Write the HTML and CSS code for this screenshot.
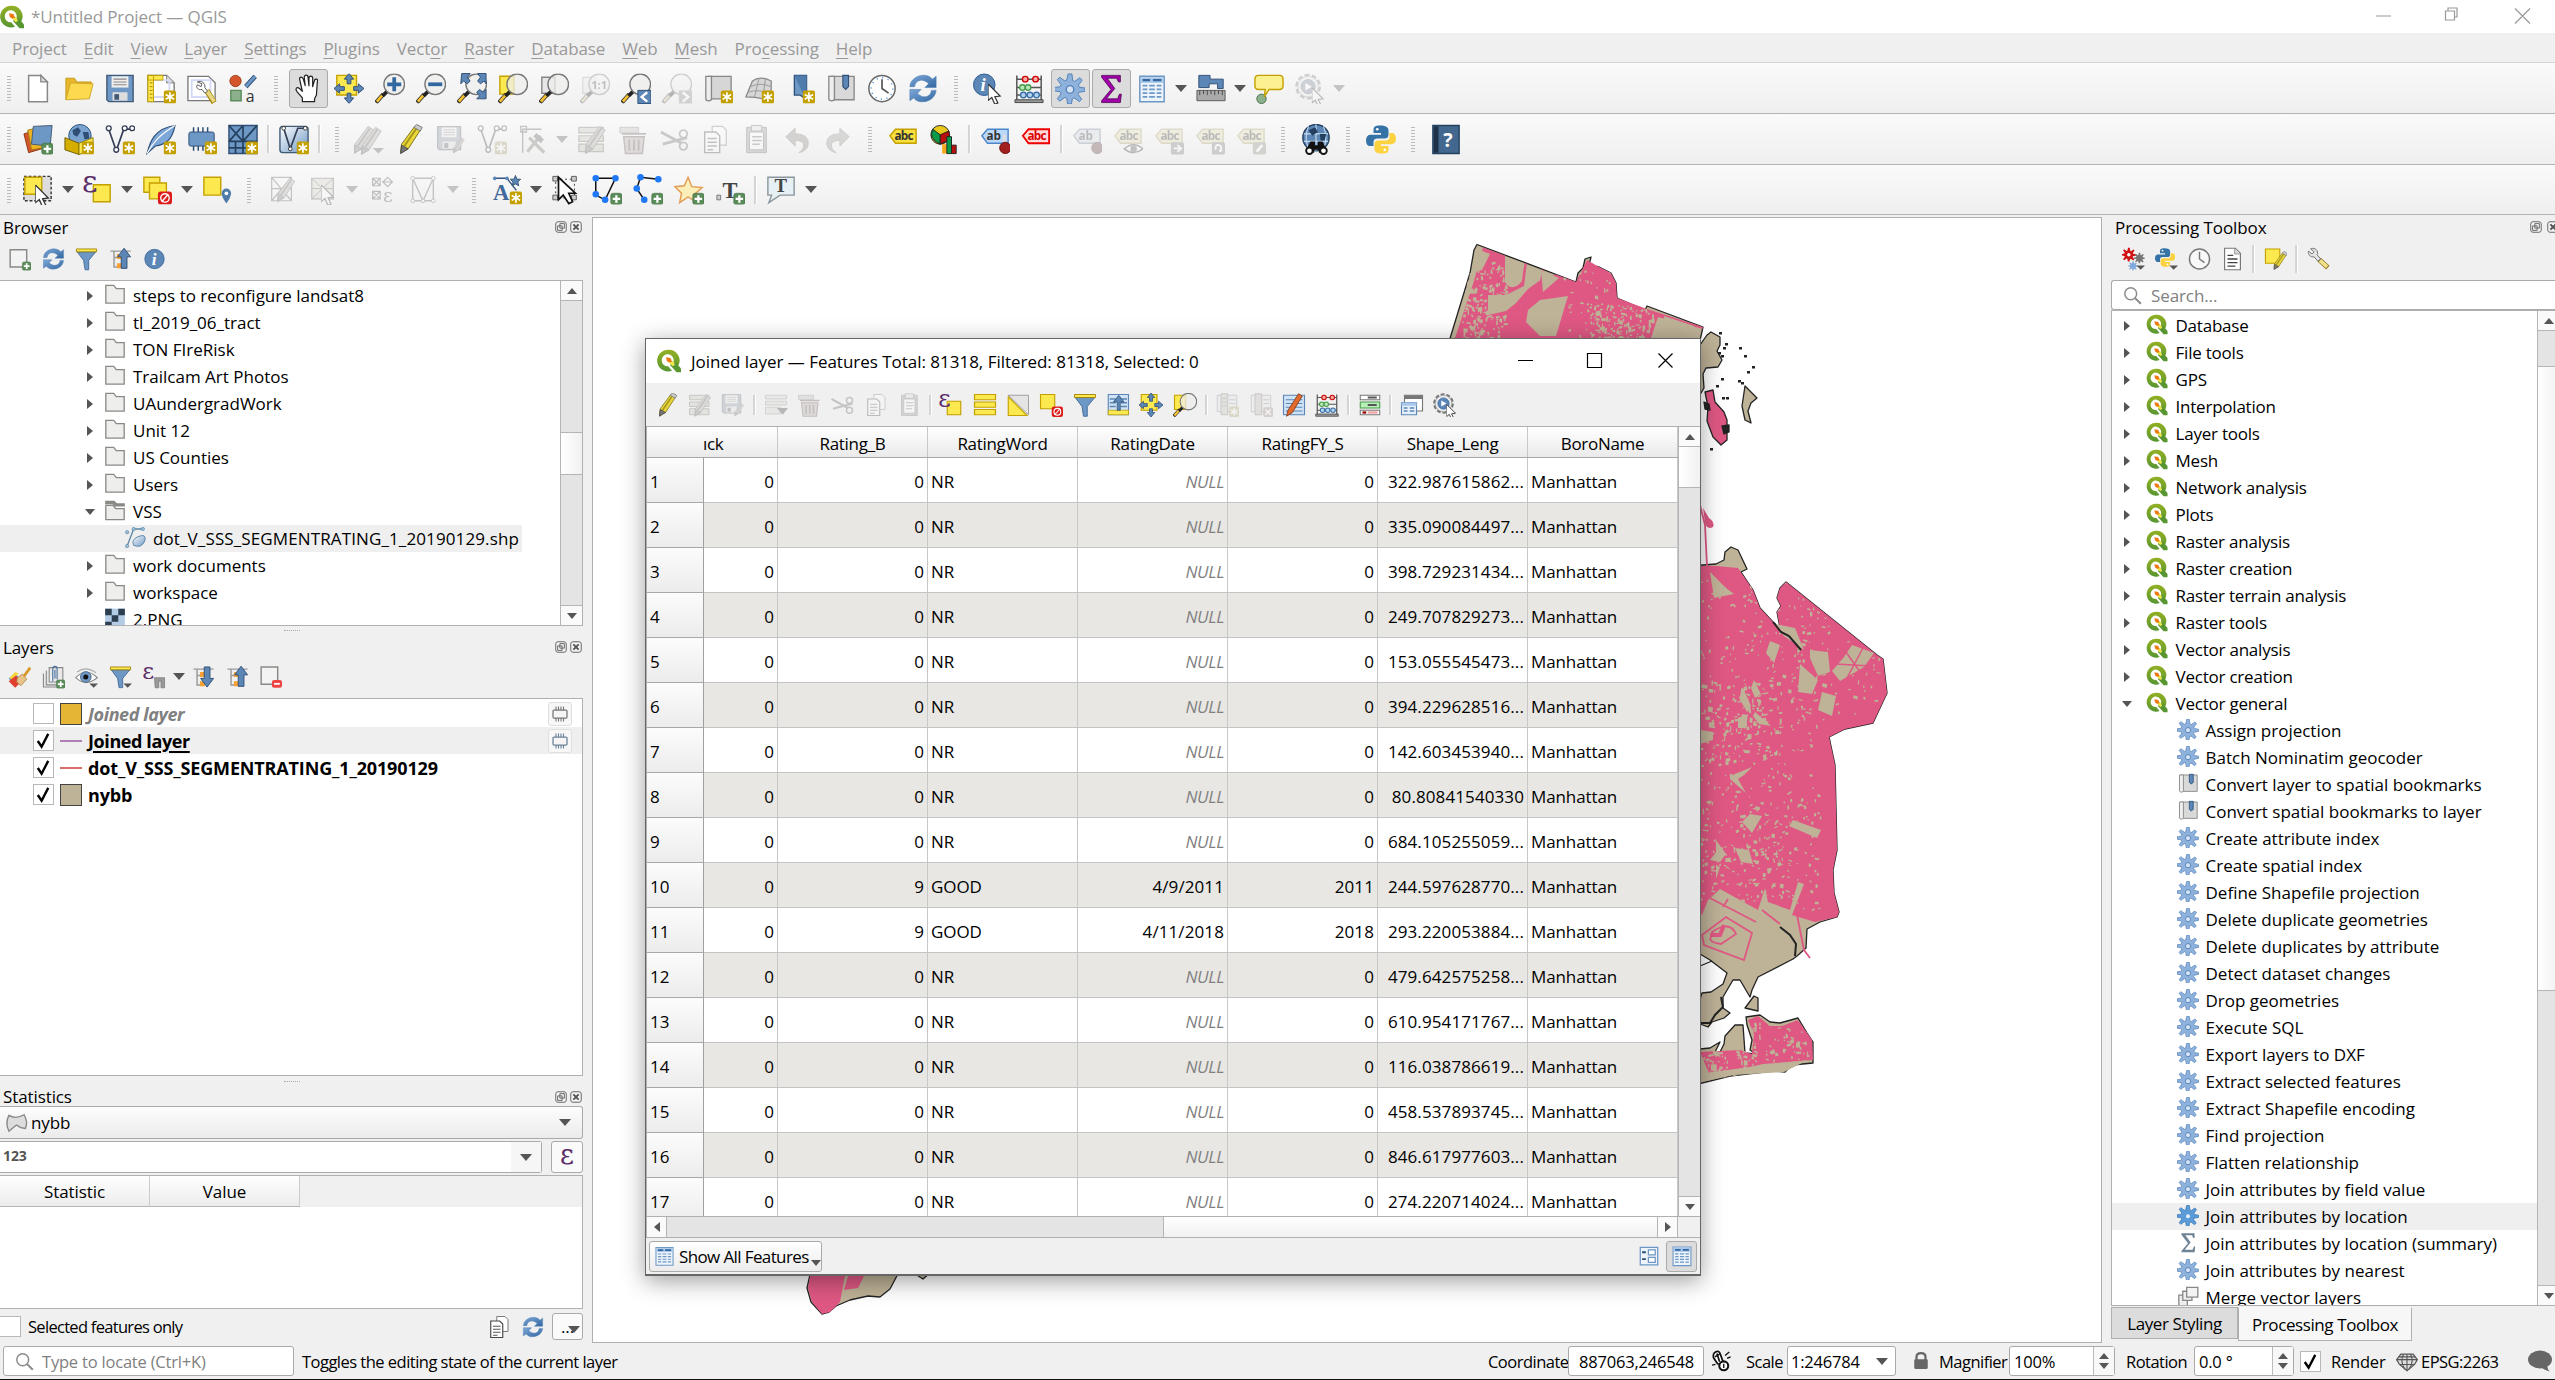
FILE: index.html
```html
<!DOCTYPE html>
<html lang="en">
<head>
<meta charset="utf-8">
<title>*Untitled Project — QGIS</title>
<link rel="stylesheet" href="styles.css">
</head>
<body>
<svg class="defs" width="0" height="0" aria-hidden="true">
<defs>
<linearGradient id="gq" x1="0" y1="0" x2="0" y2="1"><stop offset="0" stop-color="#93b023"/><stop offset="1" stop-color="#589632"/></linearGradient>
<linearGradient id="gb" x1="0" y1="0" x2="1" y2="1"><stop offset="0" stop-color="#7da7d9"/><stop offset="1" stop-color="#33679f"/></linearGradient>
<linearGradient id="gl" x1="0" y1="0" x2="1" y2="1"><stop offset="0" stop-color="#fff"/><stop offset="1" stop-color="#6d97c4"/></linearGradient>
<symbol id="b-star" viewBox="0 0 32 32"><rect x="19" y="18" width="13" height="14" rx="2" fill="#c4a000"/><path d="M25.5 20v10M21 22.5l9 5M30 22.5l-9 5" stroke="#fff" stroke-width="1.8"/></symbol>
<symbol id="b-plus" viewBox="0 0 32 32"><rect x="20" y="20" width="12" height="12" rx="2.5" fill="#5a8c5a" stroke="#3f6b3f" stroke-width=".6"/><path d="M26 22v8M22 26h8" stroke="#fff" stroke-width="2.4"/></symbol>
<symbol id="b-arrow" viewBox="0 0 32 32"><path d="M20 25h12l-6 6z" fill="#555"/></symbol>
<symbol id="qgis" viewBox="0 0 32 32"><path d="M15 1a14.500 14.500 0 1 0 5 28l-5-6a8 8 0 1 1 7-6l6 6A14.500 14.500 0 0 0 15 1z" fill="url(#gq)"/><path d="M18 18l7 0 7 8v5h-6l-8-9z" fill="#589632"/><path d="M15 15l6 1 3 5-3 2-5-5z" fill="#f0e64a"/><path d="M12 11l6 1 2 5-4 1-3-2z" fill="#ee7913"/></symbol>
<symbol id="new" viewBox="0 0 32 32"><path d="M6 2h13l7 7v21H6z" fill="#fff" stroke="#888" stroke-width="1.6"/><path d="M19 2v7h7z" fill="#ddd" stroke="#888" stroke-width="1.4"/></symbol>
<symbol id="open" viewBox="0 0 32 32"><path d="M2 28V5h9l3 4h15v5" fill="#e8b62a" stroke="#c49a1a"/><path d="M2 28l5-18 24 1-4 16z" fill="#fcd94f" stroke="#cfa628"/></symbol>
<symbol id="save" viewBox="0 0 32 32"><path d="M2 2h28v28H4l-2-2z" fill="#6d97c4" stroke="#415a75" stroke-width="1.5"/><path d="M7 3h18v12H7z" fill="#eee"/><path d="M9 6h14M9 9h14M9 12h14" stroke="#888" stroke-width="1.2"/><path d="M8 20h16v9H8z" fill="#ddd"/><path d="M10 22h5v6h-5z" fill="#415a75"/></symbol>
<symbol id="layout" viewBox="0 0 32 32"><path d="M2 2h20l8 8v20H2z" fill="#fff" stroke="#777" stroke-width="1.4"/><path d="M22 2v8h8" fill="#ddd" stroke="#777"/><path d="M7 7h18v18H7z" fill="none" stroke="#d3d9f7" stroke-width="2"/><path d="M2 2h6v28H2zM2 2h16v5H2z" fill="#fce94f" stroke="#c4a000"/><path d="M4 10h3M4 14h3M4 18h3M4 22h3M4 26h3" stroke="#a08000"/><use href="#b-star"/></symbol>
<symbol id="layman" viewBox="0 0 32 32"><path d="M1 3h22l7 7v19H1z" fill="#fff" stroke="#777" stroke-width="1.4"/><path d="M5 7h20v18H5z" fill="#fff" stroke="#d3d9f7" stroke-width="2"/><path d="M21 18l8 13" stroke="#a08000" stroke-width="6"/><path d="M21 18l8 12" stroke="#e8d680" stroke-width="4"/><path d="M11 9c4-2 9 1 8 6l3 4-3 2-3-4c-4 1-7-2-5-5l4 2 1-3z" fill="#fff" stroke="#555"/></symbol>
<symbol id="style" viewBox="0 0 32 32"><circle cx="8" cy="8" r="6" fill="#d4562a" stroke="#9a3b18"/><path d="M19 14L29 3" stroke="#2e5077" stroke-width="5"/><path d="M19 14L29 3" stroke="#6d97c4" stroke-width="3"/><path d="M3 18h11v11H3z" fill="#8bb08b" stroke="#5a8c5a" stroke-width="1.5"/><text x="19" y="30" font-family="Open Sans" font-size="17" fill="#333">a</text></symbol>
<symbol id="hand" viewBox="0 0 32 32"><path d="M10 30V26L4 19c-2-3 0-5 3-3l3 3L7 6c0-3 3-3 4 0l2 7-1-9c0-3 4-3 4 0l1 9V5c0-3 4-3 4 0l0 9 2-7c1-2 4-1 3 1l-1 15-2 4v3z" fill="#fff" stroke="#222" stroke-width="1.3" stroke-linejoin="round"/></symbol>
<symbol id="arrows4" viewBox="0 0 32 32"><path d="M16 0l5 6h-3v5h-4V6h-3zM16 32l5-6h-3v-5h-4v5h-3zM0 16l6-5v3h5v4H6v3zM32 16l-6-5v3h-5v4h5v3z" fill="#5b86b5" stroke="#2e4e75" stroke-width="1"/></symbol>
<symbol id="pansel" viewBox="0 0 32 32"><path d="M3 2h21v21H3z" fill="#fce94f" stroke="#c4a000" stroke-width="1.5"/><use href="#arrows4"/></symbol>
<symbol id="mag" viewBox="0 0 32 32"><path d="M1 31L9 22" stroke="#333" stroke-width="4.500"/><path d="M2 30L8 23" stroke="#f5c12e" stroke-width="2.800"/><path d="M8 24l5-5" stroke="#222" stroke-width="4"/><circle cx="20.500" cy="11.500" r="11" fill="#eeeeec" fill-opacity=".75" stroke="#777" stroke-width="1.500"/></symbol>
<symbol id="zin" viewBox="0 0 32 32"><use href="#mag"/><path d="M20.500 4v15M13 11.500h15" stroke="#33679f" stroke-width="4"/></symbol>
<symbol id="zout" viewBox="0 0 32 32"><use href="#mag"/><path d="M13 11.500h15" stroke="#33679f" stroke-width="4"/></symbol>
<symbol id="zfull" viewBox="0 0 32 32"><use href="#mag"/><path d="M5 0h9l-3 4 3 4-3 3-4-3-3 3zM31 0h-9l3 4-3 4 3 3 4-3 2 3zM31 27h-10l3-3-3-4 3-3 4 3 3-3z" fill="#5b86b5" stroke="#2e4e75"/></symbol>
<symbol id="zsel" viewBox="0 0 32 32"><path d="M2 3h15v19H2z" fill="#fce94f" stroke="#c4a000" stroke-width="1.5"/><use href="#mag"/></symbol>
<symbol id="zlay" viewBox="0 0 32 32"><path d="M3 4h14v17H3z" fill="#e6e6e6" stroke="#888" stroke-width="1.5"/><use href="#mag"/></symbol>
<symbol id="znat" viewBox="0 0 32 32"><path d="M3 4h14v17H3z" fill="#e6e6e6" stroke="#888"/><use href="#mag"/><text x="12" y="17" font-family="Open Sans" font-weight="bold" font-size="12" fill="#444">1:1</text></symbol>
<symbol id="zlast" viewBox="0 0 32 32"><use href="#mag"/><path d="M18 18h14v14H18z" fill="#5b86b5" stroke="#2e4e75"/><path d="M28 20l-6 5 6 5" fill="none" stroke="#fff" stroke-width="2.500"/></symbol>
<symbol id="znext" viewBox="0 0 32 32"><use href="#mag"/><path d="M18 18h14v14H18z" fill="#888"/><path d="M22 20l6 5-6 5" fill="none" stroke="#fff" stroke-width="2.500"/></symbol>
<symbol id="newmap" viewBox="0 0 32 32"><path d="M6 3h24v24H6z" fill="#d6d6d6" stroke="#888" stroke-width="1.4"/><path d="M3 3h6v24c0 3-6 3-6 0z" fill="#eee" stroke="#888" stroke-width="1.400"/><use href="#b-star"/></symbol>
<symbol id="map3d" viewBox="0 0 32 32"><path d="M9 8q8-6 20 0v21q-14-4-27-4z" fill="#d6d6d6" stroke="#888" stroke-width="1.3"/><path d="M7 14q10-5 22 0M4 20q12-4 25 2M16 5l-5 21M23 5l-3 22" fill="none" stroke="#999"/><use href="#b-star"/></symbol>
<symbol id="bookm" viewBox="0 0 32 32"><path d="M10 2h13v26l-7-5-6 0z" fill="#6d97c4" stroke="#2e4e75" stroke-width="1.4"/><path d="M10 2h13v27z" fill="#4f7cad"/><use href="#b-star"/></symbol>
<symbol id="bmap" viewBox="0 0 32 32"><path d="M5 3h25v25H5z" fill="#d9d9d9" stroke="#888" stroke-width="1.400"/><path d="M3 3h6v24c0 3-6 3-6 0z" fill="#eee" stroke="#888" stroke-width="1.4"/><path d="M18 2h6v12l-3 3-3-3z" fill="#5b86b5" stroke="#2e4e75" stroke-width="1.2"/></symbol>
<symbol id="clock" viewBox="0 0 32 32"><circle cx="16" cy="16" r="14" fill="#fff" stroke="#666" stroke-width="1.6"/><circle cx="16" cy="16" r="11.500" fill="none" stroke="#4a90d9" stroke-width="1.500" stroke-dasharray="1.2 4.800"/><path d="M16 6v10l7 5" fill="none" stroke="#555" stroke-width="1.8"/></symbol>
<symbol id="history" viewBox="0 0 32 32"><circle cx="16" cy="16" r="14" fill="#f8f8f8" stroke="#777" stroke-width="2"/><path d="M16 6v10l7 5" fill="none" stroke="#777" stroke-width="2"/></symbol>
<symbol id="refresh" viewBox="0 0 32 32"><path d="M2 14C3 2 20-2 26 6l4-3v12H18l4-4C17 5 8 6 7 14z" fill="url(#gb)" stroke="#4d7fb5" stroke-width=".6"/><path d="M30 18C29 30 12 34 6 26l-4 3V17h12l-4 4c5 6 14 5 15-3z" fill="url(#gb)" stroke="#4d7fb5" stroke-width=".6"/></symbol>
<symbol id="cursor" viewBox="0 0 32 32"><path d="M0 0l0 22 5-4 4 9 4-2-4-8 7-1z" fill="#fff" stroke="#333" stroke-width="1.600"/></symbol>
<symbol id="ident" viewBox="0 0 32 32"><circle cx="12" cy="12" r="11.500" fill="#5b86b5" stroke="#2e5c94"/><text x="8" y="19" font-family="Liberation Serif" font-style="italic" font-weight="bold" font-size="20" fill="#fff">i</text><use href="#cursor" x="16" y="11" width="26" height="26"/></symbol>
<symbol id="info" viewBox="0 0 32 32"><circle cx="16" cy="16" r="13.500" fill="#5b86b5" stroke="#2e5c94"/><text x="12" y="24" font-family="Liberation Serif" font-style="italic" font-weight="bold" font-size="24" fill="#fff">i</text></symbol>
<symbol id="abacus" viewBox="0 0 32 32"><path d="M3 2v27M29 2v27M3 6h26M3 15h26M3 23h26" stroke="#555" stroke-width="1.6"/><path d="M1 28h30v3H1z" fill="#999" stroke="#444"/><g stroke-width="1.400"><g fill="#f5a9a9" stroke="#c00"><circle cx="12" cy="6" r="3"/><circle cx="23" cy="6" r="3"/></g><g fill="#b6e8b6" stroke="#4a9a4a"><circle cx="9" cy="15" r="3"/><circle cx="15" cy="15" r="3"/></g><g fill="#b5d4f2" stroke="#3a6ea5"><circle cx="10" cy="23" r="3"/><circle cx="17" cy="23" r="3"/><circle cx="24" cy="23" r="3"/></g></g></symbol>
<symbol id="gear" viewBox="0 0 32 32"><g fill="#8fb2dc" stroke="#4f7fb8" stroke-width="1"><path id="gp" d="M14 .5h4l1 7 2 1 5.500-4 2.500 2.500-4 5.500 1 2 6 1v3.500l-6.500 1-1 2 4 5.500-2.500 2.500-5.500-4-2 1-1 5.500h-4l-1-6-2-1-5.500 4-2.500-2.500 4-5.500-1-2-6.500-1v-3.500l6.500-1 1-2-4-5.500 2.500-2.500 5.500 4 2-1z"/></g><circle cx="16" cy="17" r="4" fill="#d5e3f3" stroke="#4f7fb8" stroke-width="1.400"/></symbol>
<symbol id="gearsel" viewBox="0 0 32 32"><use href="#gp" fill="#5b9bd8" stroke="#2f6fb0"/><circle cx="16" cy="17" r="3" fill="#e8f1fa"/></symbol>
<symbol id="sigma" viewBox="0 0 32 32"><path d="M6 2h20v7h-2l-2-4H12l8 11-9 11h12l2-5h2l-1 9H6v-2l10-12L6 4z" fill="#a000a8" stroke="#4a004e" stroke-width=".8"/></symbol>
<symbol id="sigmas" viewBox="0 0 32 32"><path d="M6 2h20v7h-2l-2-4H12l8 11-9 11h12l2-5h2l-1 9H6v-2l10-12L6 4z" fill="#6f8396"/></symbol>
<symbol id="table" viewBox="0 0 32 32"><path d="M3 3h26v27H3z" fill="#eef4fb" stroke="#6d97c4" stroke-width="1.600"/><path d="M4 4h24v6H4z" fill="#a9c7ea"/><path d="M6 7h8M17 7h9" stroke="#33679f" stroke-width="2.500"/><path d="M6 13h5M13 13h6M21 13h5M6 17h5M13 17h6M21 17h5M6 21h5M13 21h6M21 21h5M6 25h5M13 25h6M21 25h5" stroke="#6d97c4" stroke-width="1.800"/></symbol>
<symbol id="measure" viewBox="0 0 32 32"><path d="M3 2h12v4h14v10h-6v-5H14v4H3z" fill="#5b86b5" stroke="#2e4e75"/><path d="M1 18h30v11H1z" fill="#aaa" stroke="#555"/><path d="M4 18v5M8 18v4M12 18v5M16 18v4M20 18v5M24 18v4M28 18v5" stroke="#444"/></symbol>
<symbol id="tip" viewBox="0 0 32 32"><ellipse cx="8" cy="27" rx="5" ry="5" fill="#8bb08b" stroke="#4c6b4c"/><path d="M5 2h22q4 0 4 4v7q0 4-4 4H16L11 25l1-8H5q-4 0-4-4V6q0-4 4-4z" fill="#fbf191" stroke="#c4a000" stroke-width="1.500"/></symbol>
<symbol id="run" viewBox="0 0 32 32"><circle cx="14" cy="14" r="12" fill="#e8e8e8" stroke="#777" stroke-width="3.500" stroke-dasharray="5 2.500"/><circle cx="14" cy="14" r="11" fill="#eee" stroke="#999"/><circle cx="14" cy="14" r="7.500" fill="#5b86b5" stroke="#33679f"/><path d="M11 10l7 4-7 4z" fill="#fff"/><use href="#cursor" x="18" y="15" width="24" height="24"/></symbol>
<symbol id="layers" viewBox="0 0 32 32"><path d="M1 10l16-5 6 20-17 5z" fill="#d4562a" stroke="#8a3414"/><path d="M5 6l17-4 4 22-17 3z" fill="#f0b323" stroke="#a07c10"/><path d="M11 2l20-1-2 22-20-2z" fill="#6d97c4" stroke="#415a75"/><use href="#b-plus"/></symbol>
<symbol id="globebox" viewBox="0 0 32 32"><circle cx="17" cy="12" r="12" fill="#7aa3d0" stroke="#2e4e75"/><path d="M9 6l6-3 3 4-4 6-4-2zM20 8l6 0 1 7-5 1z" fill="#2e4e75"/><path d="M1 14l15 6v12L1 27z" fill="#d3ad00" stroke="#6b5900"/><path d="M16 20l15-6v13l-15 5z" fill="#fce94f" stroke="#8f7600"/><use href="#b-star"/></symbol>
<symbol id="vee" viewBox="0 0 32 32"><path d="M4 5l8 23L20 5h9" fill="none" stroke="#333e55" stroke-width="1.800"/><g fill="#fff" stroke="#333e55" stroke-width="1.400"><circle cx="4" cy="4" r="2.600"/><circle cx="12" cy="27" r="2.600"/><circle cx="21" cy="4" r="2.600"/><circle cx="29" cy="4" r="2.600"/></g><use href="#b-star"/></symbol>
<symbol id="feather" viewBox="0 0 32 32"><path d="M1 31C4 20 8 4 31 1c-2 10-6 20-21 22z" fill="#7da7d9" stroke="#2e4e75" stroke-width="1.200"/><path d="M1 31C8 18 16 10 31 1" fill="none" stroke="#fff" stroke-width="1.200"/><use href="#b-star"/></symbol>
<symbol id="chip" viewBox="0 0 32 32"><path d="M7 3v25M12 3v25M17 3v25M22 3v25" stroke="#2e4e75" stroke-width="1.600"/><rect x="2" y="8" width="27" height="15" rx="2" fill="#6d97c4" stroke="#2e4e75"/><use href="#b-star"/></symbol>
<symbol id="mesh" viewBox="0 0 32 32"><path d="M1 1h30v30H1z" fill="#6d97c4" stroke="#2e4e75" stroke-width="1.500"/><path d="M1 1l15 17L31 1M1 18h30M16 1v30M1 18L16 1M1 25h30M8 18v13" fill="none" stroke="#24405f" stroke-width="1.800"/><use href="#b-star"/></symbol>
<symbol id="vlayer" viewBox="0 0 32 32"><rect x="1" y="2" width="30" height="28" rx="3" fill="url(#gl)" stroke="#415a75" stroke-width="1.500"/><path d="M5 4l7 22L20 4h8" fill="none" stroke="#333e55" stroke-width="1.800"/><circle cx="5" cy="4" r="2" fill="#fff" stroke="#333"/><circle cx="12" cy="26" r="2" fill="#fff" stroke="#333"/><circle cx="28" cy="4" r="2" fill="#fff" stroke="#333"/><use href="#b-star"/></symbol>
<symbol id="pencil" viewBox="0 0 32 32"><path d="M6 30l1-9L21 2l6 4-13 20z" fill="#e8d63c" stroke="#7a6c10"/><path d="M10 23L23 4" stroke="#a59519" stroke-width="2"/><path d="M6 31l1-9 7 4z" fill="#777" stroke="#444"/><path d="M20 3l3-3 6 3-2 4z" fill="#ccc" stroke="#777"/></symbol>
<symbol id="gpencil" viewBox="0 0 32 32"><path d="M6 30l1-9L21 2l6 4-13 20z" fill="#b9a79a" stroke="#555"/><path d="M10 23L23 4" stroke="#6d5a50" stroke-width="2"/><path d="M6 31l1-9 7 4z" fill="#777" stroke="#444"/></symbol>
<symbol id="pencils" viewBox="0 0 32 32"><use href="#gpencil" x="-6"/><use href="#gpencil" x="2" y="1"/><use href="#b-arrow"/></symbol>
<symbol id="savep" viewBox="0 0 32 32"><use href="#save" width="28" height="29"/><use href="#gpencil" x="15" y="12" width="18" height="20"/></symbol>
<symbol id="tools" viewBox="0 0 32 32"><path d="M5 30V5h20M3 2h6v6H3z" fill="none" stroke="#555" stroke-width="1.500"/><path d="M10 29L24 12M12 14l16 16" stroke="#7c6f50" stroke-width="3.500"/><path d="M18 11l8 7" stroke="#555" stroke-width="5"/></symbol>
<symbol id="tabp" viewBox="0 0 32 32"><path d="M2 3h26v6H2zM2 12h26v6H2zM2 21h26v8H2z" fill="#c9c49a" stroke="#6e6a48" stroke-width="1.300"/><use href="#gpencil" x="3"/></symbol>
<symbol id="trash" viewBox="0 0 32 32"><path d="M2 3h20v6H2z" fill="#c9b8b0" stroke="#777"/><path d="M6 13h22l-2 18H8z" fill="#c9a0a0" stroke="#844" stroke-width="1.500"/><path d="M4 10h26M12 16v12M17 16v12M22 16v12" stroke="#844" stroke-width="2"/></symbol>
<symbol id="cut" viewBox="0 0 32 32"><path d="M2 8l22 12M4 21L30 14" stroke="#666" stroke-width="3"/><circle cx="26" cy="10" r="4" fill="none" stroke="#666" stroke-width="2"/><circle cx="26" cy="23" r="4" fill="none" stroke="#666" stroke-width="2"/></symbol>
<symbol id="copy" viewBox="0 0 32 32"><path d="M13 2h11l4 4v16H13z" fill="#fff" stroke="#777" stroke-width="1.300"/><path d="M5 8h12l4 4v18H5z" fill="#fff" stroke="#444" stroke-width="1.500"/><path d="M8 15h10M8 19h10M8 23h10M8 27h6" stroke="#555" stroke-width="1.500"/></symbol>
<symbol id="paste" viewBox="0 0 32 32"><path d="M6 3h21v27H6z" fill="#999" stroke="#555"/><path d="M9 8h15v19H9z" fill="#fff" stroke="#555"/><path d="M11 1h11v6H11z" fill="#ddd" stroke="#555"/><path d="M12 13h10M12 17h10M12 21h8" stroke="#666" stroke-width="1.500"/></symbol>
<symbol id="undo" viewBox="0 0 32 32"><path d="M4 13L14 4v6c10 0 14 4 14 10s-5 9-10 10c4-3 5-5 5-8s-3-5-9-5v6z" fill="#98826a" stroke="#7c6a55"/></symbol>
<symbol id="redo" viewBox="0 0 32 32"><path d="M28 13L18 4v6C8 10 4 14 4 20s5 9 10 10c-4-3-5-5-5-8s3-5 9-5v6z" fill="#8c9a85" stroke="#6c7a66"/></symbol>
<symbol id="abc" viewBox="0 0 32 32"><path d="M2 12l6-7h22v15H8z" fill="#f7df3d" stroke="#c4a000" stroke-width="1.500"/><text x="7" y="17" font-family="Open Sans" font-weight="bold" font-size="12.500" textLength="20" fill="#333">abc</text></symbol>
<symbol id="abcr" viewBox="0 0 32 32"><path d="M2 12l6-7h22v15H8z" fill="#ffd9d9" stroke="#e00" stroke-width="2"/><text x="7" y="17" font-family="Open Sans" font-weight="bold" font-size="12.500" textLength="20" fill="#d00">abc</text></symbol>
<symbol id="abpin" viewBox="0 0 32 32"><path d="M2 12l6-7h22v15H8z" fill="#bcd9fa" stroke="#4a86c8" stroke-width="1.500"/><text x="7" y="17" font-family="Open Sans" font-weight="bold" font-size="12.500" fill="#333">ab</text><path d="M26 11v12" stroke="#ddd" stroke-width="3"/><circle cx="27" cy="25" r="6" fill="#a32020" stroke="#6b1010"/></symbol>
<symbol id="diagram" viewBox="0 0 32 32"><circle cx="12" cy="11" r="10" fill="#e9c81c" stroke="#222"/><path d="M12 11L4 5q-5 10 8 16z" fill="#0a9b4a" stroke="#222"/><path d="M12 11l9-4q4 10-9 14z" fill="#b80f0f" stroke="#222"/><path d="M14 21h5v10h-5z" fill="#f6a821"/><path d="M19 13h5v18h-5z" fill="#0a9b4a" stroke="#222"/><path d="M24 22h5v9h-5z" fill="#b80f0f" stroke="#222"/></symbol>
<symbol id="abcx" viewBox="0 0 32 32"><use href="#abc"/><rect x="18" y="19" width="14" height="13" rx="2" fill="#777"/><path d="M21 25.500h7M25 22l4 3.500-4 3.500" stroke="#fff" stroke-width="2" fill="none"/></symbol>
<symbol id="abcrot" viewBox="0 0 32 32"><use href="#abc"/><rect x="18" y="19" width="14" height="13" rx="2" fill="#777"/><path d="M22 27q-1-6 4-5 4 2 0 7M26 29l3-2" stroke="#fff" stroke-width="2" fill="none"/></symbol>
<symbol id="abced" viewBox="0 0 32 32"><use href="#abc"/><rect x="18" y="19" width="14" height="13" rx="2" fill="#8a8a60"/><path d="M22 29l6-7" stroke="#fff" stroke-width="3"/></symbol>
<symbol id="abceye" viewBox="0 0 32 32"><use href="#abc"/><path d="M12 26q10-9 20 0-10 8-20 0z" fill="#fff" stroke="#333" stroke-width="1.500"/><circle cx="22" cy="26" r="3.500" fill="#555"/></symbol>
<symbol id="binoc" viewBox="0 0 32 32"><circle cx="16" cy="14" r="14" fill="#5b86b5" stroke="#24405f" stroke-width="1.500"/><path d="M3 10h26M3 18h26M16 0v28M8 2q-5 12 0 24M24 2q5 12 0 24" stroke="#c7dbf0" fill="none" stroke-width="1.200"/><path d="M8 6l7-3 3 5-6 4zM20 10l7 0-2 7-4 0z" fill="#24405f"/><path d="M6 26l4-8h5v4h3v-4h5l4 8v4H19v-3h-5v3H6z" fill="#111"/><circle cx="9" cy="28" r="3.500" fill="#fff" stroke="#111" stroke-width="2"/><circle cx="24" cy="28" r="3.500" fill="#fff" stroke="#111" stroke-width="2"/></symbol>
<symbol id="python" viewBox="0 0 32 32"><path d="M15 1c-6 0-7 2-7 5v3h8v2H5c-3 0-5 2-5 6s2 6 4 6h4v-4c0-3 2-4 4-4h8c2 0 4-1 4-4V6c0-3-3-5-9-5z" fill="#3573a6"/><path d="M17 31c6 0 7-2 7-5v-3h-8v-2h11c3 0 5-2 5-6s-2-6-4-6h-3v4c0 3-2 4-4 4h-8c-2 0-4 1-4 4v5c0 3 3 5 8 5z" fill="#fdd23f"/><circle cx="12" cy="5" r="1.400" fill="#fff"/><circle cx="20" cy="27" r="1.400" fill="#fff"/></symbol>
<symbol id="help" viewBox="0 0 32 32"><path d="M2 1h28v30H2z" fill="#43688f" stroke="#24405f" stroke-width="1.500"/><path d="M3 2h5v28H3z" fill="#1d3147"/><text x="13" y="24" font-family="Open Sans" font-weight="bold" font-size="21" fill="#fff">?</text></symbol>
<symbol id="select" viewBox="0 0 32 32"><path d="M1 2h29v26H1z" fill="#ddd" stroke="#333" stroke-width="1.500" stroke-dasharray="3 2"/><path d="M2 3h18v18H2z" fill="#fce94f" stroke="#c4a000" stroke-width="1.500"/><use href="#cursor" x="13" y="11" width="28" height="28"/></symbol>
<symbol id="eps" viewBox="0 0 32 32"><text x="-1" y="19" font-family="DejaVu Serif" font-size="32" fill="#5c2f6b">ε</text></symbol>
<symbol id="selexp" viewBox="0 0 32 32"><path d="M11 11h18v18H11z" fill="#fce94f" stroke="#c4a000" stroke-width="1.500"/><use href="#eps"/></symbol>
<symbol id="no" viewBox="0 0 32 32"><rect x="17" y="18" width="15" height="14" rx="3" fill="#dc1c1c"/><circle cx="24.500" cy="25" r="4.500" fill="none" stroke="#fff" stroke-width="1.500"/><path d="M21 29l7-8" stroke="#fff" stroke-width="1.500"/></symbol>
<symbol id="desel" viewBox="0 0 32 32"><path d="M2 3h17v16H2z" fill="#fce94f" stroke="#c4a000" stroke-width="1.500"/><path d="M8 9h18v17H8z" fill="#fce94f" stroke="#c4a000" stroke-width="1.500"/><use href="#no"/></symbol>
<symbol id="desel1" viewBox="0 0 32 32"><path d="M2 2h19v19H2z" fill="#fce94f" stroke="#c4a000" stroke-width="1.500"/><use href="#no"/></symbol>
<symbol id="selloc" viewBox="0 0 32 32"><path d="M2 3h18v19H2z" fill="#fce94f" stroke="#c4a000" stroke-width="1.500"/><path d="M26 31q-5-7-5-11a5 5 0 0 1 10 0q0 4-5 11z" fill="#4f7ba8"/><circle cx="26" cy="20" r="2" fill="#fff"/></symbol>
<symbol id="mx" viewBox="0 0 32 32"><path d="M5 3h21v25H5zM5 3l21 25M26 3L5 28M5 15h21" fill="none" stroke="#555" stroke-width="1.300"/><use href="#gpencil" x="6" y="2" width="28" height="28"/></symbol>
<symbol id="mx2" viewBox="0 0 32 32"><path d="M4 4h23v22H4z" fill="#d8d3a6" stroke="#555" stroke-width="1.300"/><path d="M4 4l23 22M27 4L4 26M4 15h23" stroke="#555"/><use href="#cursor" x="14" y="11" width="26" height="26"/></symbol>
<symbol id="mx3" viewBox="0 0 32 32"><path d="M6 4h8v8H6zM6 4l8 8M14 4l-8 8M6 18h8v8H6zM6 18l8 8M14 18l-8 8M16 8h12M22 3l5 5-5 5-5-5z" fill="none" stroke="#444" stroke-width="1.300"/><text x="17" y="29" font-family="DejaVu Serif" font-size="20" fill="#444">ε</text></symbol>
<symbol id="mx4" viewBox="0 0 32 32"><path d="M5 4h22v24H5zM5 4l11 24L27 4" fill="none" stroke="#555" stroke-width="1.500"/><g fill="#fff" stroke="#555"><circle cx="5" cy="4" r="2"/><circle cx="27" cy="4" r="2"/><circle cx="5" cy="28" r="2"/><circle cx="27" cy="28" r="2"/><circle cx="16" cy="28" r="2"/></g></symbol>
<symbol id="annot" viewBox="0 0 32 32"><path d="M2 4h14l10 13" fill="none" stroke="#33527a" stroke-width="1.500"/><circle cx="3" cy="4" r="2" fill="#5b86b5"/><circle cx="16" cy="4" r="2" fill="#5b86b5"/><text x="1" y="27" font-family="Liberation Serif" font-weight="bold" font-size="24" fill="#3f6a9b">A</text><path d="M25 1l1.500 4h4l-3 3 1 4-3.500-2-3.500 2 1-4-3-3h4z" fill="#5b86b5" stroke="#33527a"/><use href="#b-star"/></symbol>
<symbol id="acur" viewBox="0 0 32 32"><path d="M5 5h20v20H5z" fill="none" stroke="#333" stroke-dasharray="2 3"/><path d="M2 2h5v5H2zM22 2h5v5h-5zM2 22h5v5H2zM22 22h5v5h-5z" fill="#ccc" stroke="#555"/><path d="M8 3l0 24 5-5 6 9 4-2-4-9 7 0z" fill="#fff" stroke="#111" stroke-width="1.800"/></symbol>
<symbol id="apoly" viewBox="0 0 32 32"><path d="M4 4h21l-11 23L4 22z" fill="none" stroke="#111" stroke-width="1.600"/><g fill="#1f78f5"><circle cx="4" cy="4" r="3.500"/><circle cx="25" cy="4" r="3.500"/><circle cx="4" cy="21" r="3.500"/><circle cx="14" cy="27" r="3.500"/></g><use href="#b-plus"/></symbol>
<symbol id="aline" viewBox="0 0 32 32"><path d="M27 5L8 3 4 15l8 12" fill="none" stroke="#111" stroke-width="1.600"/><g fill="#1f78f5"><circle cx="27" cy="5" r="3.500"/><circle cx="8" cy="3" r="3.500"/><circle cx="4" cy="15" r="3.500"/><circle cx="12" cy="27" r="3.500"/></g><use href="#b-plus"/></symbol>
<symbol id="astar" viewBox="0 0 32 32"><path d="M15 3l4 10 11 1-8 7 3 9-10-6-9 6 2-10-7-7 10-1z" fill="#fbeeb8" stroke="#e29b52" stroke-width="1.500"/><use href="#b-plus"/></symbol>
<symbol id="atext" viewBox="0 0 32 32"><text x="8" y="25" font-family="Liberation Serif" font-weight="bold" font-size="24" fill="#444">T</text><path d="M2 22h4v5H2z" fill="#ccc" stroke="#777"/><use href="#b-plus"/></symbol>
<symbol id="acall" viewBox="0 0 32 32"><path d="M2 3h28v19H15L3 30l3-8H2z" fill="#e6f0f5" stroke="#8a969c" stroke-width="1.500"/><text x="9" y="19" font-family="Liberation Serif" font-weight="bold" font-size="20" fill="#444">T</text></symbol>
<symbol id="newbox" viewBox="0 0 32 32"><path d="M3 3h23v24H3z" fill="#f3f3f3" stroke="#888a85" stroke-width="2"/><use href="#b-plus"/></symbol>
<symbol id="rembox" viewBox="0 0 32 32"><path d="M3 2h23v24H3z" fill="#f3f3f3" stroke="#888a85" stroke-width="2"/><rect x="18" y="20" width="14" height="11" rx="3" fill="#ef4444"/><path d="M21 25.500h8" stroke="#fff" stroke-width="2.500"/></symbol>
<symbol id="filter" viewBox="0 0 32 32"><path d="M3 6h26L19 18v13h-5l-2-13z" fill="#6d97c4" stroke="#3c6796" stroke-width="1.200"/><path d="M2 2h28v4H2z" fill="#fce94f" stroke="#a08000" stroke-width="1.200"/></symbol>
<symbol id="filterd" viewBox="0 0 32 32"><use href="#filter"/><use href="#b-arrow"/></symbol>
<symbol id="tree" viewBox="0 0 32 32"><path d="M2 5h28M7 5v22h6M7 14h5" fill="none" stroke="#999" stroke-width="2"/><path d="M11 9h7v7h-7zM11 22h7v7h-7z" fill="#f7a035"/></symbol>
<symbol id="collapse" viewBox="0 0 32 32"><use href="#tree"/><path d="M17 29V13h-5L21 1l9 12h-5v16z" fill="#5b86b5" stroke="#2e4e75" stroke-width="1.300"/></symbol>
<symbol id="expand" viewBox="0 0 32 32"><use href="#tree"/><path d="M17 2v16h-5l9 12 9-12h-5V2z" fill="#5b86b5" stroke="#2e4e75" stroke-width="1.300"/></symbol>
<symbol id="brush" viewBox="0 0 32 32"><path d="M1 18l9-8 6 8-7 9z" fill="#4a90e2"/><path d="M2 17l8-8 5 2-9 10z" fill="#f5d63c"/><path d="M1 22l10-8 8 8-9 9-4-4z" fill="#e0402f"/><path d="M13 17l7-5 6 7-8 9-6-5z" fill="#e8c48a" stroke="#a5763a"/><path d="M22 15L31 3" stroke="#d79a2c" stroke-width="4"/></symbol>
<symbol id="addgrp" viewBox="0 0 32 32"><path d="M10 3h19v20H10zM6 7v20h18M2 11v19h18" fill="#e9e9e9" stroke="#888" stroke-width="1.500"/><path d="M15 22V5q0-4 3-4t3 4v14M18 6v12" fill="none" stroke="#3f6a9b" stroke-width="1.500"/><use href="#b-plus"/></symbol>
<symbol id="eye" viewBox="0 0 32 32"><path d="M1 17Q15 2 31 17 15 30 1 17z" fill="#fff" stroke="#888" stroke-width="1.500"/><path d="M3 9q12-9 26 1" fill="none" stroke="#aaa" stroke-width="1.500"/><circle cx="15" cy="16" r="7.500" fill="#6d97c4" stroke="#415a75"/><circle cx="15" cy="16" r="3.500" fill="#111"/><use href="#b-arrow"/></symbol>
<symbol id="epsf" viewBox="0 0 32 32"><use href="#eps"/><path d="M16 17h14v14h-5v-9h-3v9h-5z" fill="#999" stroke="#777"/></symbol>
<symbol id="folder" viewBox="0 0 32 32"><path d="M2 2h12l4 5h12v22H2z" fill="#eeeeec" stroke="#888a85" stroke-width="2"/></symbol>
<symbol id="folderopen" viewBox="0 0 32 32"><path d="M1 1h14l4 4h12v5H16l-4-4H1z" fill="#888a85"/><path d="M2 8h11l4 5h13v17H2z" fill="#eeeeec" stroke="#888a85" stroke-width="2"/></symbol>
<symbol id="shp" viewBox="0 0 32 32"><path d="M4 29L14 3h14" fill="none" stroke="#5c87a8" stroke-width="2"/><g fill="#9cc1dc" stroke="#5c87a8"><circle cx="4" cy="8" r="2.500"/><circle cx="14" cy="3" r="2.500"/><circle cx="28" cy="3" r="2.500"/><circle cx="4" cy="29" r="2.500"/></g><path d="M14 28q-4-8 6-13 14-6 11 6-5 12-17 7z" fill="url(#gl)" stroke="#5c87a8" stroke-width="1.500"/></symbol>
<symbol id="png" viewBox="0 0 32 32"><path d="M1 1h30v30H1z" fill="#b3cbe5"/><path d="M1 1h10v10H1zM21 1h10v10H21zM11 11h10v10H11zM1 21h10v10H1z" fill="#2c3e50"/></symbol>
<symbol id="memory" viewBox="0 0 32 32"><path d="M8 1v30M13 1v30M18 1v30M23 1v30" stroke="currentColor" stroke-width="2.200"/><rect x="2" y="8" width="28" height="16" rx="2" fill="#f5f5f5" stroke="currentColor" stroke-width="2.500"/></symbol>
<symbol id="polyg" viewBox="0 0 32 32"><path d="M5 5q10 6 22-1 6 10 2 20-7 0-13-5-5 4-11 9-6-12 0-23z" fill="#ddd" stroke="#888a85" stroke-width="2"/></symbol>
<symbol id="search" viewBox="0 0 32 32"><circle cx="13" cy="13" r="10" fill="none" stroke="#8b8b8b" stroke-width="2.500"/><path d="M20 20l10 10" stroke="#8b8b8b" stroke-width="3.500"/></symbol>
<symbol id="gears" viewBox="0 0 32 32"><g fill="#cf1313"><use href="#gp" transform="scale(.6)"/></g><g fill="#777"><use href="#gp" transform="translate(17 7) scale(.46)"/></g><g fill="#7fa8dc"><use href="#gp" transform="translate(9 19) scale(.4)"/></g><circle cx="9.500" cy="10" r="2.400" fill="#fff"/><use href="#b-arrow"/></symbol>
<symbol id="pyd" viewBox="0 0 32 32"><use href="#python" width="28" height="28"/><use href="#b-arrow"/></symbol>
<symbol id="doc" viewBox="0 0 32 32"><path d="M5 1h15l7 7v23H5z" fill="#fff" stroke="#777" stroke-width="1.600"/><path d="M19 1v8h8" fill="#ddd" stroke="#777"/><path d="M9 11h8M9 16h14M9 21h14M9 26h11" stroke="#444" stroke-width="1.800"/></symbol>
<symbol id="editsel" viewBox="0 0 32 32"><path d="M2 2h20v20H2z" fill="#fce94f" stroke="#c4a000" stroke-width="1.500"/><use href="#pencil" x="9" y="5" width="26" height="27"/></symbol>
<symbol id="wrench" viewBox="0 0 32 32"><path d="M17 17l12 11" stroke="#8f7a20" stroke-width="7"/><path d="M18 18l10 9" stroke="#f0e08a" stroke-width="5"/><path d="M5 2c6-3 12 3 9 8l5 6-4 3-5-6C5 14 1 10 2 5l5 4 3-3z" fill="#e4e4e4" stroke="#666" stroke-width="1.200"/></symbol>
<symbol id="merge" viewBox="0 0 32 32"><path d="M2 14h13v16H2z" fill="#eee" stroke="#888" stroke-width="2"/><path d="M8 8h14v14H8z" fill="#eee" stroke="#888" stroke-width="2"/><path d="M14 2h17v15H14z" fill="#f3f3f3" stroke="#888" stroke-width="2"/></symbol>
<symbol id="rows" viewBox="0 0 32 32"><path d="M2 2h28v7H2zM2 12h28v7H2zM2 22h28v7H2z" fill="#fce94f" stroke="#c4a000" stroke-width="1.600"/></symbol>
<symbol id="invert" viewBox="0 0 32 32"><path d="M3 3h27v26z" fill="#e4e4e4" stroke="#888"/><path d="M3 5v25h25z" fill="#fce94f" stroke="#c4a000" stroke-width="1.500"/></symbol>
<symbol id="totop" viewBox="0 0 32 32"><path d="M3 2h27v27H3z" fill="#cfe2f6" stroke="#5b86b5" stroke-width="1.500"/><path d="M5 8h8M20 8h8M5 13h8M20 13h8M5 18h8M20 18h8" stroke="#5b86b5" stroke-width="2"/><path d="M3 23h27v6H3z" fill="#fce94f" stroke="#c4a000"/><path d="M15 23V12h-5l7-9 7 9h-5v11z" fill="#5b86b5" stroke="#2e4e75"/></symbol>
<symbol id="addrow" viewBox="0 0 32 32"><path d="M2 3h28v5H2zM2 11h28v5H2zM2 19h20v9H2z" fill="#d4d4bc" stroke="#777"/><path d="M17 20h15l-7 9z" fill="#333"/></symbol>
<symbol id="newfld" viewBox="0 0 32 32"><path d="M3 3h26v22H3z" fill="#dce6f0" stroke="#667"/><path d="M8 1h9v28H8z" fill="#c6c29a" stroke="#555"/><path d="M19 9h8M19 14h8M9 7h7M9 12h7M9 17h7" stroke="#667"/><use href="#b-star"/></symbol>
<symbol id="delfld" viewBox="0 0 32 32"><path d="M3 3h26v22H3z" fill="#dce6f0" stroke="#667"/><path d="M8 1h9v28H8z" fill="#d8b0b0" stroke="#744"/><path d="M19 9h8M19 14h8" stroke="#667"/><rect x="19" y="19" width="13" height="13" rx="2" fill="#c77"/><path d="M22 22l7 7M29 22l-7 7" stroke="#fff" stroke-width="2"/></symbol>
<symbol id="calc" viewBox="0 0 32 32"><path d="M2 3h28v26H2z" fill="#cfe2f6" stroke="#5b86b5" stroke-width="1.500"/><path d="M5 9h22M5 14h22M5 19h22M5 24h22" stroke="#5b86b5" stroke-width="1.500"/><path d="M6 31l2-8L22 1l5 3-13 22z" fill="#e0692c" stroke="#7a3210"/></symbol>
<symbol id="cond" viewBox="0 0 32 32"><path d="M3 3h26v6H3z" fill="#fff" stroke="#777" stroke-width="1.400"/><path d="M3 12h26v8H3z" fill="#b9efb9" stroke="#4a9a4a" stroke-width="1.400"/><path d="M3 23h26v6H3z" fill="#fff" stroke="#777" stroke-width="1.400"/><path d="M13 6h12M13 16h12" stroke="#555" stroke-width="2.500"/><path d="M6 26h5" stroke="#900" stroke-width="3"/><path d="M13 26h13" stroke="#f2a0a0" stroke-width="3"/></symbol>
<symbol id="dock" viewBox="0 0 32 32"><path d="M6 3h24v21H6z" fill="#fff" stroke="#777" stroke-width="1.500"/><path d="M6 3h24v5H6z" fill="#777"/><path d="M2 13h20v16H2z" fill="#e6f0fb" stroke="#5b86b5" stroke-width="1.500"/><path d="M2 13h20v4H2z" fill="#a9c7ea"/><path d="M5 20h5M13 20h6M5 24h5M13 24h6" stroke="#5b86b5" stroke-width="2"/></symbol>
<symbol id="form" viewBox="0 0 32 32"><path d="M2 2h28v28H2z" fill="#eef4fb" stroke="#6d97c4" stroke-width="2"/><path d="M5 10h6M5 21h6" stroke="#2e4e75" stroke-width="3"/><path d="M15 6h11v8H15zM15 18h11v8H15z" fill="#fff" stroke="#6d97c4" stroke-width="2"/></symbol>
<symbol id="lock" viewBox="0 0 32 32"><path d="M8 14V9q0-7 8-7t8 7v5" fill="none" stroke="#666" stroke-width="4"/><rect x="4" y="13" width="24" height="17" rx="2" fill="#666"/></symbol>
<symbol id="track" viewBox="0 0 32 32"><path d="M8 3q5-3 7 3l4 11q-2 5-8 3L5 11q-1-6 3-8z" fill="#fff" stroke="#111" stroke-width="2.500"/><path d="M7 10l7-4M10 5l4 12" stroke="#111" stroke-width="2.500"/><circle cx="20" cy="23" r="6.500" fill="#fff" stroke="#111" stroke-width="3"/><path d="M20 20v6M22 8l6-5M25 12l5-2M3 22l5-1" stroke="#111" stroke-width="2"/></symbol>
<symbol id="crs" viewBox="0 0 32 32"><path d="M7 6h18l6 8-4 7-11 9L5 21l-4-7z" fill="#ddd" stroke="#555" stroke-width="1.800"/><path d="M1 14h30M5 21h22M16 6v24M11 6q-6 10 2 22M21 6q6 10-2 22M4 10h24" fill="none" stroke="#555" stroke-width="1.600"/></symbol>
<symbol id="bubble" viewBox="0 0 32 32"><ellipse cx="16" cy="14" rx="16" ry="12" fill="#666"/><path d="M16 24q6 4 13 6-4-4-3-10z" fill="#666"/></symbol>
<symbol id="float" viewBox="0 0 16 16"><rect x="1" y="1" width="14" height="14" rx="3" fill="#f4f4f4" stroke="#666" stroke-width="1.300"/><path d="M6.500 3.500h6v6h-6zM3.500 6.500h6v6h-6z" fill="none" stroke="#666" stroke-width="1.300"/></symbol>
<symbol id="close" viewBox="0 0 16 16"><rect x="1" y="1" width="14" height="14" rx="3" fill="#f4f4f4" stroke="#666" stroke-width="1.300"/><path d="M4.500 4.500l7 7M11.500 4.500l-7 7" stroke="#555" stroke-width="2.600"/></symbol>
<symbol id="check" viewBox="0 0 20 20"><path d="M4 10.500l4 6 7-13.500" fill="none" stroke="#000" stroke-width="2.500"/></symbol>
</defs>
</svg>

<div class="app">
  <header class="titlebar">
    <svg class="logo"><use href="#qgis"/></svg>
    <span class="title-text">*Untitled Project — QGIS</span>
    <svg class="winctl" viewBox="0 0 180 33"><path d="M14 16.500h15M83.500 20.500v-9h9v9zM86 11v-2.500h9v9h-2.500M153 9l15 15M168 9l-15 15" transform="translate(0 -.5)" fill="none" stroke="#999" stroke-width="1.200"/></svg>
  </header>
  <nav class="menubar">
    <span>Pro<u>j</u>ect</span><span><u>E</u>dit</span><span><u>V</u>iew</span><span><u>L</u>ayer</span><span><u>S</u>ettings</span><span><u>P</u>lugins</span><span>Vect<u>o</u>r</span><span><u>R</u>aster</span><span><u>D</u>atabase</span><span><u>W</u>eb</span><span><u>M</u>esh</span><span>Pro<u>c</u>essing</span><span><u>H</u>elp</span>
  </nav>
  <div class="toolbar" data-items="grip0 new open save layout layman style grip hand* pansel zin zout zfull zsel zlay znat- zlast znext- newmap map3d bookm bmap clock refresh grip ident abacus gear* sigma* table arrow measure arrow tip run- arrow-"></div>
  <div class="toolbar" data-items="grip0 layers globebox vee feather chip mesh sep vlayer sep grip pencils- pencil savep- vee- tools- arrow- tabp- trash- cut- copy- paste- undo- redo- grip abc diagram sep abpin abcr sep abpin- abceye- abcx- abcrot- abced- grip binoc grip python grip help"></div>
  <div class="toolbar third" data-items="grip0 select arrow selexp arrow desel arrow selloc grip mx- mx2- arrow- mx3- mx4- arrow- grip annot arrow acur apoly aline astar atext sep acall arrow"></div>

  <main class="work">
    <aside class="left">
      <section class="panel browser">
        <div class="ptitle"><span>Browser</span><svg><use href="#float"/></svg><svg><use href="#close"/></svg></div>
        <div class="ptools" data-items="newbox refresh filter collapse info"></div>
        <div class="frame">
          <div class="tree" id="browser-tree"></div>
          <div class="vscroll"><b class="up"></b><i class="t1"></i><i class="handle"></i><i class="trough"></i><b class="down"></b></div>
        </div>
      </section>
      <section class="panel layers">
        <div class="hgrip"></div>
        <div class="ptitle"><span>Layers</span><svg><use href="#float"/></svg><svg><use href="#close"/></svg></div>
        <div class="ptools" data-items="brush addgrp eye filterd epsf arrow expand collapse rembox"></div>
        <div class="frame">
          <div class="layer-list">
            <div class="lrow off"><span class="cb"></span><span class="sw gold"></span><span class="ln">Joined layer</span><span class="mem"><svg><use href="#memory"/></svg></span></div>
            <div class="lrow cur"><span class="cb"><svg><use href="#check"/></svg></span><span class="ls violet"></span><span class="ln">Joined layer</span><span class="mem blue"><svg><use href="#memory"/></svg></span></div>
            <div class="lrow"><span class="cb"><svg><use href="#check"/></svg></span><span class="ls red"></span><span class="ln">dot_V_SSS_SEGMENTRATING_1_20190129</span></div>
            <div class="lrow"><span class="cb"><svg><use href="#check"/></svg></span><span class="sw tan"></span><span class="ln">nybb</span></div>
          </div>
        </div>
      </section>
      <section class="panel stats">
        <div class="hgrip"></div>
        <div class="ptitle"><span>Statistics</span><svg><use href="#float"/></svg><svg><use href="#close"/></svg></div>
        <div class="combo"><svg><use href="#polyg"/></svg><span>nybb</span><i class="tri"></i></div>
        <div class="crow"><div class="combo edit"><em>123</em><span class="dd"><i class="tri"></i></span></div><div class="ebtn">ε</div></div>
        <div class="stable"><div class="sth"><span>Statistic</span><span>Value</span></div></div>
        <div class="sfoot"><span class="cb"></span><label>Selected features only</label><svg class="s1"><use href="#copy"/></svg><svg class="s2"><use href="#refresh"/></svg><span class="dots">...<i class="tri"></i></span></div>
      </section>
    </aside>

    <section class="canvas">
      <svg class="map" viewBox="593 218 1508 1124">
        <defs>
          <clipPath id="cq"><path d="M1690 566L1716 564 1724 560 1738 568 1741 570 1753 590 1760 608 1773 622 1780 628 1777 612 1781 606 1777 598 1780 588 1786 582 1877 655 1883 659 1887 693 1873 723 1845 729 1829 737 1835 765 1837 850 1833 870 1834 893 1839 912 1837 917 1815 922 1792 915 1804 884 1798 882 1790 910 1768 902 1765 888 1758 910 1720 889 1708 900 1702 905 1690 905z"/></clipPath>
          <clipPath id="cb"><path d="M1479 246L1576 282 1582 270 1587 260 1599 267 1611 273 1616 283 1617 298 1647 309 1703 327 1699 345H1450L1470 273z"/></clipPath>
          <clipPath id="cr"><path d="M1700 1052l40-2 14 4-4-30 8-6 12 6 10 0 16-4 14 24 0 18-50 8-60 14z"/></clipPath>
        </defs>
        <g stroke="#232323" stroke-width="1.300" stroke-linejoin="round" fill="#beb297">
          <path d="M1477 244.500L1576 282 1578 273 1583 268 1585 259 1591 257 1589 265 1599 267 1611 273 1616 283 1617 298 1645 310 1647 306 1703 327 1699 345H1448L1470 273 1474 250z"/>
          <path d="M1700 345l7-10 4-3 9 5 0 8-3 6 5 9-4 7-12 1-3 6 1 14-6 10z"/>
          <path d="M1745 386l12 12-6 5-3 8 3 12-6-3-3-14z"/>
          <path d="M1705 392l8-2 2 12 9 10 3 8 0 20-6 5-8-8-6-16 1-14z" fill="#df5883"/>
          <path d="M1722 426l7-1 0 7-5 2zM1704 402l5 2 1 6-5-1z" fill="#232323"/>
          <path d="M1690 566L1716 564 1724 560 1725 552 1731 547 1738 550 1747 569 1741 572 1753 590 1760 608 1773 622 1780 628 1777 612 1781 606 1777 598 1780 588 1786 582 1877 655 1883 659 1887 693 1873 723 1845 729 1829 737 1835 765 1837 850 1833 870 1834 893 1839 912 1837 917 1820 922 1807 929 1806 948 1797 956 1793 959 1758 977 1752 990 1750 997 1740 980 1733 980 1723 997 1723 1008 1730 1013 1724 1018 1712 1022 1708 1027 1690 1020z"/>
          <path d="M1690 950l10 4 10 6 17 13-4 11-12 8-9 1-4 12-8 5z" fill="#fff"/>
          <path d="M1700 966l12-5" fill="none"/>
          <path d="M1745 1008l9-12 4 2 0 13z"/>
          <path d="M1690 1086L1730 1076 1773 1071 1785 1072 1792 1065 1813 1063 1813 1042 1807 1033 1798 1018 1780 1023 1770 1022 1760 1015 1746 1017 1747 1025 1752 1040 1750 1050 1756 1054 1745 1053 1743 1025 1735 1025 1725 1036 1724 1044 1715 1062 1711 1060 1720 1042 1710 1048 1690 1050z"/>
          <path d="M811 1270L807 1288 811 1302 822 1314 829 1312 836 1306 850 1300 868 1296 880 1297 890 1289 900 1270z"/>
          <path d="M912 1272l11 7 8-7z"/>
        </g>
        <g fill="#df5883">
          <path clip-path="url(#cb)" d="M1484 244l21 11 0 28 8 2 8-5 4-18 2 0-3 24-18 9-18 0 0 20 18-4 10-8 12-14 14-10 18-6 8-12 12-2 10-30 60 20-20 50 80 24 8 10-60-16-12 36h-54l-4-14-8 14h-32l-4-8-8 8H1450l24-72z"/>
          <path d="M1690 566L1716 566 1738 568 1753 590 1760 608 1773 622 1780 628 1777 612 1781 606 1777 598 1780 588 1786 582 1877 655 1883 659 1887 693 1873 723 1845 729 1829 737 1835 765 1837 850 1833 870 1834 893 1839 912 1837 917 1815 922 1792 915 1804 884 1798 882 1790 910 1768 902 1765 888 1758 910 1720 889 1708 900 1702 915 1690 905z"/>
          <path d="M1700 1052l40-2 12 4 2-20-6-14 10-4 12 10 12 0 16-6 14 20 1 20-50 4-53 12z"/>
          <path d="M811 1270l-3 18 4 14 10 12 8-2 10-10 6-32zM848 1276h16l-6 12-14 2z"/>
          <path d="M1703 508l6 10q6 4 4 9-6 3-8-4z"/>
        </g>
        <g fill="none" stroke="#df5883" stroke-width="1.800">
          <path d="M1700 505l5 20 2 42M1702 935l24-18 26 16-8 27-40-15zM1708 897l48 25M1762 910l18 14M1797 915l7 35 6 8M1712 932q18-12 24 2l-15 10q-16-2-8-10zM1728 899l-5 8"/>
          <path d="M1710 935l10 0 4-10" stroke-width="4"/>
          <path d="M1510 318l25-20 25-25M1524 310v26M1545 262l-8 38" clip-path="url(#cb)" stroke-width="2"/>
        </g>
        <g fill="#beb297">
          <path d="M1506 257l18 6-2 18q-8 10-15 4zM1540 300l28-4-12 40-16 0-14-14 2-12zM1541 270l18 8-16 14z"/>
          <path d="M1664 316l30 10-2 16-30-2zM1480 250l10 4-8 16-8 2z"/>
          <path d="M1710 572l16 16 8 6-20 4z"/>
          <path d="M1775 624l20 4 9 22-20-14zM1780 645l-10-4-4 12 8 10z"/>
          <path d="M1810 650l18 2 2 20-12 4-8-18zM1852 645l22 8-10 14-24 14-8-10 12-14zM1800 664l18 16-6 14-14-2zM1822 692l14 4-4 20-14-6z"/>
          <path d="M1754 680l7 14-6 4-4-10zM1743 688l8 18-4 6-8-14zM1755 712l16 14-12-2-6-8zM1738 718l10-4-2 14h-8zM1701 730l12 2v8l-13 4z"/>
          <path d="M1730 776l22-9-8 8-6 4 8 14-16-14zM1742 822l8-8 12 2-10 17zM1793 820l28 10-4 8-28-12zM1716 840l10 14-6 8-10-2 6-8zM1735 848l14 2 4 14-12-2zM1716 865l4 2-4 12z"/>
          <path d="M1698 1074l60-8 20-2 30-4-16 8-8 4-50 3-45 10z"/>
        </g>
        <g fill="none" stroke="#df5883" stroke-width="1.500"><path d="M1841 645l24 34M1846 680l18-34M1836 664l34 2"/></g>
        <g fill="#beb297" id="specks"></g>
        <path id="dots" fill="#232323"/>
        <path d="M1773 622l8 10 8 4 12 14M1780 927l10 8 6 9-1 12M1721 997l2 10-8 8-5 8-10 0" fill="none" stroke="#232323" stroke-width="2"/>
      </svg>
    </section>

    <aside class="right">
      <div class="ptitle"><span>Processing Toolbox</span><svg><use href="#float"/></svg><svg><use href="#close"/></svg></div>
      <div class="ptools" data-items="gears pyd history doc sep editsel sep wrench"></div>
      <div class="psearch"><svg><use href="#search"/></svg><span>Search...</span></div>
      <div class="frame">
        <div class="tree" id="toolbox-tree"></div>
        <div class="vscroll"><b class="up"></b><i class="t1"></i><i class="handle"></i><i class="trough"></i><b class="down"></b></div>
      </div>
      <div class="tabs"><span>Layer Styling</span><span class="on">Processing Toolbox</span></div>
    </aside>
  </main>

  <footer class="status">
    <div class="locator"><svg><use href="#search"/></svg><span>Type to locate (Ctrl+K)</span></div>
    <span class="msg">Toggles the editing state of the current layer</span>
    <span class="lbl lcoord">Coordinate</span><div class="box coord">887063,246548</div>
    <svg class="ic trk"><use href="#track"/></svg>
    <span class="lbl lscale">Scale</span><div class="box scale">1:246784<i class="tri"></i></div>
    <svg class="ic lck"><use href="#lock"/></svg>
    <span class="lbl lmagn">Magnifier</span><div class="box magn">100%<span class="spin"></span></div>
    <span class="lbl lrot">Rotation</span><div class="box rot">0.0 °<span class="spin"></span></div>
    <span class="cb"><svg><use href="#check"/></svg></span><span class="lbl lrend">Render</span>
    <svg class="ic glb"><use href="#crs"/></svg><span class="lbl">EPSG:2263</span>
    <svg class="ic bub"><use href="#bubble"/></svg>
  </footer>

  <div class="dialog">
    <div class="dtitle"><svg><use href="#qgis"/></svg><span>Joined layer — Features Total: 81318, Filtered: 81318, Selected: 0</span>
      <svg class="dctl" viewBox="0 0 182 44"><path d="M0 21.500h15M69.500 14.500h14v14h-14zM140.500 14.500l14 14M154.500 14.500l-14 14" fill="none" stroke="#000" stroke-width="1.200"/></svg></div>
    <div class="dtools" data-items="pencil tabp- savep- sep addrow- trash- cut- copy- paste- sep selexp rows invert desel1 filter totop pansel zsel sep newfld- delfld- calc abacus sep cond sep dock run"></div>
    <div class="grid">
      <div class="dtable">
        <div class="dhead"><span class="first">ıck</span><span>Rating_B</span><span>RatingWord</span><span>RatingDate</span><span>RatingFY_S</span><span>Shape_Leng</span><span>BoroName</span></div>
        <div id="rows-body"></div>
      </div>
      <div class="vscroll"><b class="up"></b><i class="handle"></i><i class="trough"></i><b class="down"></b></div>
    </div>
    <div class="hscroll"><b class="lt"></b><i class="trough"></i><i class="handle"></i><b class="rt"></b><s></s></div>
    <div class="dfoot"><div class="showall"><svg><use href="#table"/></svg><span>Show All Features</span><i class="tri"></i></div><svg class="frm"><use href="#form"/></svg><div class="tbl"><svg><use href="#table"/></svg></div></div>
  </div>
</div>
<script src="app.js"></script>
</body>
</html>
```
FILE: styles.css
```css
* { box-sizing: border-box; }
body { margin: 0; width: 2555px; height: 1380px; overflow: hidden; background: #f0f0f0; font-family: "Open Sans", "Noto Sans", sans-serif; font-size: 17px; color: #000; }
svg { display: block; flex: none; overflow: visible; }
.defs { position: absolute; }
.app { position: relative; width: 2555px; height: 1380px; display: flex; flex-direction: column; border-bottom: 1px solid #111; overflow: hidden; white-space: nowrap; letter-spacing: -.1px; }
.titlebar { height: 33px; flex: none; background: #fff; display: flex; align-items: center; color: #999; }
.logo { width: 24px; height: 24px; margin-right: 7px; }
.title-text { flex: 1; }
.winctl { width: 180px; height: 33px; margin-right: 13px; }
.menubar { height: 30px; flex: none; display: flex; align-items: center; gap: 17px; padding: 1px 0 0 12px; border-bottom: 1px solid #d5d5d5; color: #999; }
.menubar u { text-decoration-thickness: 1px; text-underline-offset: 3px; }
.toolbar { height: 51px; flex: none; display: flex; align-items: center; background: linear-gradient(#fafafa, #efefef); border-bottom: 1px solid #b4b4b4; }
.toolbar.third { height: 50px; }
.cell { width: 41px; height: 39px; display: flex; align-items: center; justify-content: center; flex: none; }
.cell svg { width: 30px; height: 31px; }
.cell.on { width: 39px; margin: 0 1px; background: #dcdcdc; border: 1px solid #aaa; border-radius: 3px; }
.dis { opacity: .3; filter: grayscale(.7); }
.grip0, .grip { width: 24px; height: 26px; flex: none; display: flex; justify-content: center; }
.grip0 { width: 17.5px; }
.grip0::before, .grip::before { content: ""; width: 4px; background: radial-gradient(circle, #bbb 40%, transparent 45%) 0 0 / 2px 3px; }
.sep { width: 10px; height: 28px; flex: none; display: flex; justify-content: center; }
.sep::before { content: ""; width: 2px; background: #d4d4d4; border-right: 1px solid #fff; }
.arrow { width: 17.5px; display: flex; justify-content: center; flex: none; }
.third .arrow { width: 18.5px; }
.arrow::before, .tri { content: ""; border: 6px solid transparent; border-top: 7px solid #555; border-bottom: 0; width: 0; height: 0; }
.work { flex: 1; display: flex; min-height: 0; }
.left { width: 592px; display: flex; flex-direction: column; flex: none; padding-right: 9px; }
.ptitle { height: 24px; display: flex; align-items: center; gap: 3px; padding: 0 1px 0 3px; flex: none; }
.ptitle span { flex: 1; line-height: 24px; padding-top: 1px; }
.ptitle svg { width: 12px; height: 12px; }
.ptools { display: flex; align-items: center; flex: none; height: 41px; padding: 0 0 2px 3px; }
.ptools .cell { width: 33.6px; height: 30px; }
.ptools .cell svg { width: 23px; height: 24px; }
.ptools .arrow { width: 14px; margin: 0 1px; }
.frame { border: 1px solid #b0b0b0; border-left: 0; background: #fff; display: flex; overflow: hidden; flex: none; }
.browser { height: 411px; }
.browser .frame { height: 346px; }
.tree { flex: 1; overflow: hidden; padding-top: 1px; }
.trow { height: 27px; display: flex; align-items: center; line-height: 27px; }
.exp { width: 20px; flex: none; display: flex; justify-content: center; }
.exp.c::before { content: ""; border: 5.5px solid transparent; border-left: 6px solid #555; border-right: 0; }
.exp.o::before { content: ""; border: 5.5px solid transparent; border-top: 6px solid #555; border-bottom: 0; }
#browser-tree .trow { padding-left: 80px; width: 522px; letter-spacing: 0; }
#browser-tree svg { width: 22px; height: 21px; margin: -2px 7px 0 4px; }
#browser-tree .child { padding-left: 100px; background: #efefef; letter-spacing: .12px; }
.vscroll { width: 22px; display: flex; flex-direction: column; border-left: 1px solid #b5b5b5; flex: none; background: #e4e4e4; }
.vscroll b { height: 20px; background: #fafafa; display: flex; align-items: center; justify-content: center; flex: none; }
.up { border-bottom: 1px solid #b5b5b5; }
.down { border-top: 1px solid #b5b5b5; }
.up::before { content: ""; border: 5.5px solid transparent; border-bottom: 6px solid #555; border-top: 0; }
.down::before { content: ""; border: 5.5px solid transparent; border-top: 6px solid #555; border-bottom: 0; }
.vscroll .handle { background: linear-gradient(90deg, #fff, #f1f1f1); border: solid #b5b5b5; border-width: 1px 0; flex: none; }
.trough { flex: 1; background: #e4e4e4; }
.browser .t1 { height: 131px; }
.browser .handle { height: 43px; }
.hgrip { height: 10px; display: flex; justify-content: center; align-items: center; }
.hgrip::before { content: ""; width: 16px; border-top: 1px dotted #aaa; }
.layers { height: 450px; }
.layers .hgrip { height: 8px; }
.layers .ptitle { height: 26px; }
.layers .ptools { height: 38px; padding-bottom: 5px; }
.layers .frame { height: 378px; }
.layer-list { flex: 1; padding-top: 1px; }
.lrow { height: 27px; display: flex; align-items: center; padding-left: 33px; font-weight: bold; font-size: 18px; letter-spacing: -.15px; padding-right: 10px; }
.lrow.cur { background: #efefef; }
.lrow.cur .ln { text-decoration: underline; text-decoration-thickness: 1.5px; text-underline-offset: 3px; }
.lrow.off .ln, .lrow.cur .ln { letter-spacing: -.4px; }
.lrow.off .ln { color: #808080; font-style: italic; }
.cb { width: 21px; height: 21px; border: 1px solid #b8b8b8; background: #fff; flex: none; display: block; }
.cb svg { width: 19px; height: 19px; }
.sw { width: 22px; height: 22px; border: 1px solid #444; margin: 0 6px; }
.gold { background: #e5b636; }
.tan { background: #beb297; }
.ls { width: 22px; height: 2px; margin: 0 6px; }
.violet { background: #b07fb5; }
.red { background: #d86e66; }
.ln { flex: 1; }
.mem { width: 24px; height: 24px; border: 1px solid #e0e0e0; border-radius: 3px; background: #f7f7f7; color: #777; display: flex; align-items: center; justify-content: center; }
.mem svg { width: 18px; height: 16px; }
.mem.blue { color: #6a8199; }
.stats { flex: 1; display: flex; flex-direction: column; }
.stats .ptitle { height: 21px; margin-bottom: -1px; }
.combo { height: 33px; border: 1px solid #aaa; border-left: 0; border-radius: 0 3px 3px 0; background: linear-gradient(#fdfdfd, #ebebeb); display: flex; align-items: center; padding: 0 11px 0 4px; flex: none; }
.combo svg { width: 25px; height: 22px; margin-right: 2px; }
.combo span { flex: 1; }
.crow { display: flex; gap: 9px; margin: 2px 0 2px; }
.edit { width: 542px; background: #fff; padding: 0; height: 32px; }
.edit em { flex: 1; font: bold 14px "Open Sans"; color: #555; padding: 0 0 3px 3px; }
.combo .dd { flex: none; width: 30px; height: 30px; display: flex; align-items: center; justify-content: center; background: #f6f6f6; }
.ebtn { width: 32px; height: 32px; border: 1px solid #aaa; border-radius: 3px; background: #fafafa; display: flex; align-items: center; justify-content: center; font: 27px/1 "DejaVu Serif"; color: #5c2f6b; padding-bottom: 6px; }
.stable { height: 134px; border: 1px solid #b0b0b0; border-left: 0; background: #fff; flex: none; }
.sth { display: flex; height: 31px; background: #f0f0f0; }
.sth span { width: 150px; border-right: 1px solid #ccc; border-bottom: 1px solid #b5b5b5; background: linear-gradient(#fff, #ececec); display: flex; align-items: center; justify-content: center; padding-top: 1px; }
.sfoot { display: flex; align-items: center; height: 33px; margin-top: 1px; }
.sfoot .cb { border-left: 0; }
.sfoot label { padding-left: 7px; flex: 1; letter-spacing: -.7px; font-size: 16.5px; }
.sfoot svg { width: 24px; height: 24px; margin-right: 11px; }
.sfoot .s2 { width: 22px; margin-right: 8px; }
.dots { width: 31px; height: 27px; border: 1px solid #aaa; border-radius: 3px; background: #fafafa; display: flex; align-items: center; padding-left: 8px; }
.dots .tri { margin: 5px 0 0 -6px; }
.canvas { width: 1510px; flex: none; margin-top: 2px; background: #fff; border: 1px solid #b0b0b0; overflow: hidden; }
.map { width: 1508px; height: 1124px; }
.right { flex: 1; display: flex; flex-direction: column; padding-left: 9px; overflow: hidden; min-width: 0; }
.right .ptitle { padding-left: 4px; width: 449px; gap: 5px; }
.right .ptools { padding-left: 5.5px; }
.right .ptools .cell { width: 33px; }
.psearch { height: 30px; border: 1px solid #aaa; border-right: 0; border-radius: 3px 0 0 3px; background: #fff; display: flex; align-items: center; padding-left: 11px; color: #808080; flex: none; }
.psearch svg { width: 19px; height: 19px; margin-right: 9px; }
.right .frame { height: 996px; border-left: 1px solid #b0b0b0; width: 449px; }
.right .t1 { height: 35px; }
.right .handle { height: 625px; }
#toolbox-tree .trow { padding-left: 5px; letter-spacing: -.22px; }
#toolbox-tree svg { width: 22px; height: 21px; margin: -3px 7.5px 0 9px; }
#toolbox-tree .kid { padding-left: 56px; letter-spacing: 0; }
#toolbox-tree .kid svg { margin-right: 6.5px; }
#toolbox-tree .cur { background: #efefef; }
.tabs { display: flex; margin-top: 1px; align-items: flex-start; flex: none; }
.tabs span { height: 32px; width: 127px; border: 1px solid #b0b0b0; background: #dcdcdc; display: flex; align-items: center; justify-content: center; letter-spacing: -.4px; }
.tabs .on { width: 174px; height: 34px; background: #f7f7f7; border-top-color: #f7f7f7; }
.status { height: 36px; flex: none; display: flex; align-items: center; padding-left: 3px; font-size: 16.5px; letter-spacing: -.52px; }
.locator { width: 291px; height: 30px; border: 1px solid #aaa; border-radius: 3px; background: #fff; display: flex; align-items: center; color: #808080; padding-left: 11px; letter-spacing: -.2px; }
.locator svg { width: 19px; height: 19px; margin-right: 8px; }
.msg { width: 1194px; padding-left: 8px; flex: none; }
.lbl { flex: none; }
.lcoord { width: 80px; }
.lscale { width: 41px; }
.lmagn { width: 70px; }
.lrot { width: 68px; margin-left: 11px; }
.lrend { width: 65px; letter-spacing: -.2px; }
.box { height: 30px; border: 1px solid #aaa; border-radius: 3px; background: #fff; display: flex; align-items: center; padding-left: 4px; flex: none; letter-spacing: -.2px; }
.coord { width: 136px; padding-left: 10px; }
.ic { width: 22px; height: 24px; }
.trk { margin: 0 14px 0 6px; }
.scale { width: 109px; padding-left: 3px; justify-content: space-between; padding-right: 7px; }
.lck { width: 18px; height: 20px; margin: 0 9px 0 16px; }
.magn { width: 106px; justify-content: space-between; }
.rot { width: 100px; justify-content: space-between; margin-right: 6px; }
.spin { width: 21px; height: 28px; border-left: 1px solid #bbb; display: flex; flex-direction: column; align-items: center; justify-content: center; gap: 4px; background: #f8f8f8; }
.spin::before { content: ""; border: 5px solid transparent; border-bottom: 6px solid #555; border-top: 0; }
.spin::after { content: ""; border: 5px solid transparent; border-top: 6px solid #555; border-bottom: 0; }
.status .cb { margin-right: 10px; }
.glb { margin: 0 3px 0 0; }
.bub { width: 24px; margin-left: auto; margin-right: 3px; }
.dialog { position: absolute; left: 645px; top: 338px; width: 1056px; height: 938px; border: 1px solid #666; border-width: 1px 1px 2px; background: #f0f0f0; box-shadow: 0 5px 22px rgba(0, 0, 0, .38); display: flex; flex-direction: column; }
.dtitle { height: 44px; background: #fff; display: flex; align-items: center; padding-left: 11px; flex: none; letter-spacing: -.02px; }
.dtitle svg { width: 24px; height: 24px; margin-right: 10px; }
.dtitle span { flex: 1; }
.dtitle .dctl { width: 182px; height: 44px; margin: 0; }
.dtools { height: 43px; display: flex; align-items: center; padding-left: 4px; flex: none; }
.dtools .cell { width: 33.35px; }
.dtools .cell svg { width: 24px; height: 24px; }
.dtools .sep { height: 20px; width: 9px; }
.grid { display: flex; height: 791px; margin-left: 0; border-top: 1px solid #b0b0b0; border-bottom: 1px solid #b0b0b0; flex: none; }
.dtable { width: 1032px; overflow: hidden; background: #fff; border-left: 1px solid #b0b0b0; }
.dhead, .drow { display: flex; }
.dhead { height: 31px; background: linear-gradient(#fff, #eaeaea); border-bottom: 1px solid #a8a8a8; }
.dhead span { width: 150px; border-right: 1px solid #c8c8c8; display: flex; align-items: center; justify-content: center; flex: none; letter-spacing: -.3px; padding-top: 2px; }
.dhead .first { width: 131px; justify-content: flex-start; padding-left: 56px; }
.drow { height: 45px; border-bottom: 1px solid #c3c3c3; letter-spacing: .1px; }
.drow span { width: 150px; border-right: 1px solid #c8c8c8; padding: 2px 3px 0 4px; line-height: 43px; flex: none; text-align: right; }
.drow .n { width: 57px; background: linear-gradient(#fcfcfc, #ececec); border-right: 1px solid #a0a0a0; text-align: left; padding: 2px 3px 0; box-shadow: 0 1px #a8a8a8; }
.drow .a { width: 74px; }
.drow .l { text-align: left; padding-left: 3px; letter-spacing: -.1px; }
.drow .null { color: #808080; font-style: italic; letter-spacing: -.3px; }
.drow:nth-child(even) { background: #e8e7e3; }
.grid .handle { height: 41px; border-top: 0; }
.hscroll { display: flex; height: 21px; border-bottom: 1px solid #b0b0b0; flex: none; }
.hscroll b { width: 21px; background: #fafafa; border: solid #b5b5b5; border-width: 0 1px; display: flex; align-items: center; justify-content: center; }
.lt::before { content: ""; border: 5.5px solid transparent; border-right: 6px solid #555; border-left: 0; }
.rt::before { content: ""; border: 5.5px solid transparent; border-left: 6px solid #555; border-right: 0; }
.hscroll .handle { width: 494px; background: linear-gradient(#fff, #f1f1f1); border-left: 1px solid #b5b5b5; }
.hscroll s { width: 22px; }
.dfoot { flex: 1; display: flex; align-items: center; padding: 0 3px; }
.showall { width: 173px; height: 31px; border: 1px solid #aaa; border-radius: 3px; background: linear-gradient(#fff, #ececec); display: flex; align-items: center; padding-left: 4px; margin-right: auto; letter-spacing: -.62px; }
.showall svg { width: 21px; height: 22px; margin-right: 4px; }
.showall .tri { margin: 14px 0 0 2px; border-width: 6px 5px 0; }
.frm { width: 20px; height: 20px; margin-right: 7px; }
.tbl { width: 31px; height: 31px; border: 1px solid #aaa; border-radius: 3px; background: #dcdcdc; display: flex; align-items: center; justify-content: center; }
.tbl svg { width: 22px; height: 22px; }
```
FILE: app.js
```js
// Toolbars: a trailing "*" marks a pressed button, "-" a disabled one.
document.querySelectorAll('[data-items]').forEach(bar => {
  bar.innerHTML = bar.dataset.items.split(' ').map(item => {
    const on = item.endsWith('*'), off = item.endsWith('-');
    const name = item.replace(/[*-]$/, '');
    if (/^(grip0?|sep|arrow)$/.test(name)) return `<span class="${name}${off ? ' dis' : ''}"></span>`;
    return `<span class="cell${on ? ' on' : ''}${off ? ' dis' : ''}"><svg><use href="#${name}"/></svg></span>`;
  }).join('');
});

const row = (cls, exp, icon, text) =>
  `<div class="trow ${cls}"><span class="exp ${exp}"></span><svg><use href="#${icon}"/></svg><span>${text}</span></div>`;

document.getElementById('browser-tree').innerHTML =
  ['steps to reconfigure landsat8', 'tl_2019_06_tract', 'TON FIreRisk', 'Trailcam Art Photos', 'UAundergradWork', 'Unit 12', 'US Counties', 'Users']
    .map(t => row('', 'c', 'folder', t)).join('') +
  row('', 'o', 'folderopen', 'VSS') +
  row('child', '', 'shp', 'dot_V_SSS_SEGMENTRATING_1_20190129.shp') +
  row('', 'c', 'folder', 'work documents') + row('', 'c', 'folder', 'workspace') + row('', '', 'png', '2.PNG');

const kids = ['Assign projection', 'Batch Nominatim geocoder', 'Convert layer to spatial bookmarks', 'Convert spatial bookmarks to layer',
  'Create attribute index', 'Create spatial index', 'Define Shapefile projection', 'Delete duplicate geometries', 'Delete duplicates by attribute',
  'Detect dataset changes', 'Drop geometries', 'Execute SQL', 'Export layers to DXF', 'Extract selected features', 'Extract Shapefile encoding',
  'Find projection', 'Flatten relationship', 'Join attributes by field value', 'Join attributes by location',
  'Join attributes by location (summary)', 'Join attributes by nearest', 'Merge vector layers'];
const kidIcon = { 2: 'bmap', 3: 'bmap', 18: 'gearsel', 19: 'sigmas', 21: 'merge' };
document.getElementById('toolbox-tree').innerHTML =
  ['Database', 'File tools', 'GPS', 'Interpolation', 'Layer tools', 'Mesh', 'Network analysis', 'Plots', 'Raster analysis', 'Raster creation',
    'Raster terrain analysis', 'Raster tools', 'Vector analysis', 'Vector creation'].map(t => row('', 'c', 'qgis', t)).join('') +
  row('', 'o', 'qgis', 'Vector general') +
  kids.map((t, i) => `<div class="trow kid${i === 18 ? ' cur' : ''}"><svg><use href="#${kidIcon[i] || 'gear'}"/></svg><span>${t}</span></div>`).join('');

const shape = ['322.987615862…', '335.090084497…', '398.729231434…', '249.707829273…', '153.055545473…', '394.229628516…', '142.603453940…',
  '80.80841540330', '684.105255059…', '244.597628770…', '293.220053884…', '479.642575258…', '610.954171767…', '116.038786619…',
  '458.537893745…', '846.617977603…', '274.220714024…'];
const rated = { 9: ['4/9/2011', 2011], 10: ['4/11/2018', 2018] };
document.getElementById('rows-body').innerHTML = shape.map((s, i) => {
  const r = rated[i];
  return `<div class="drow"><span class="n">${i + 1}</span><span class="a">0</span><span>${r ? 9 : 0}</span>` +
    `<span class="l">${r ? 'GOOD' : 'NR'}</span><span class="${r ? '' : 'null'}">${r ? r[0] : 'NULL'}</span>` +
    `<span>${r ? r[1] : 0}</span><span>${s.replace('…', '...')}</span><span class="l">Manhattan</span></div>`;
}).join('');

// Blocks without streets, scattered over the boroughs.
let seed = 7;
const rnd = () => (seed = (seed * 16807) % 2147483647) / 2147483647;
const scatter = (clip, x, y, w, h, n, max) => {
  let d = '';
  for (let i = 0; i < n; i++) {
    const a = 1 + rnd() * rnd() * max, b = 1 + rnd() * rnd() * max, k = (rnd() - .5) * 3;
    d += `M${(x + rnd() * w).toFixed(1)} ${(y + rnd() * h).toFixed(1)}l${a.toFixed(1)} ${k.toFixed(1)} ${(-k / 2).toFixed(1)} ${b.toFixed(1)} ${(-a).toFixed(1)} ${(-k).toFixed(1)}z`;
  }
  return `<path clip-path="url(#${clip})" d="${d}"/>`;
};
document.getElementById('specks').innerHTML =
  scatter('cq', 1700, 580, 120, 330, 380, 3.5) + scatter('cq', 1790, 590, 95, 130, 90, 4) + scatter('cq', 1700, 680, 80, 80, 130, 6) +
  scatter('cq', 1700, 800, 90, 100, 110, 5) + scatter('cb', 1462, 262, 45, 80, 190, 5) + scatter('cb', 1590, 305, 65, 35, 150, 5) +
  scatter('cb', 1560, 270, 50, 70, 50, 2.5) + scatter('cr', 1700, 1015, 115, 60, 170, 5) + scatter('cr', 1700, 1050, 60, 25, 50, 6);
document.getElementById('dots').setAttribute('d',
  [[1720, 333], [1726, 344], [1724, 348], [1740, 348], [1745, 356], [1753, 367], [1748, 372], [1722, 379], [1739, 381], [1742, 383], [1717, 386], [1723, 398], [1727, 398], [1711, 449], [1719, 353], [1722, 356]]
    .map(([x, y]) => `M${x - 1} ${y - 1}h3v2.500h-3z`).join(''));
```
